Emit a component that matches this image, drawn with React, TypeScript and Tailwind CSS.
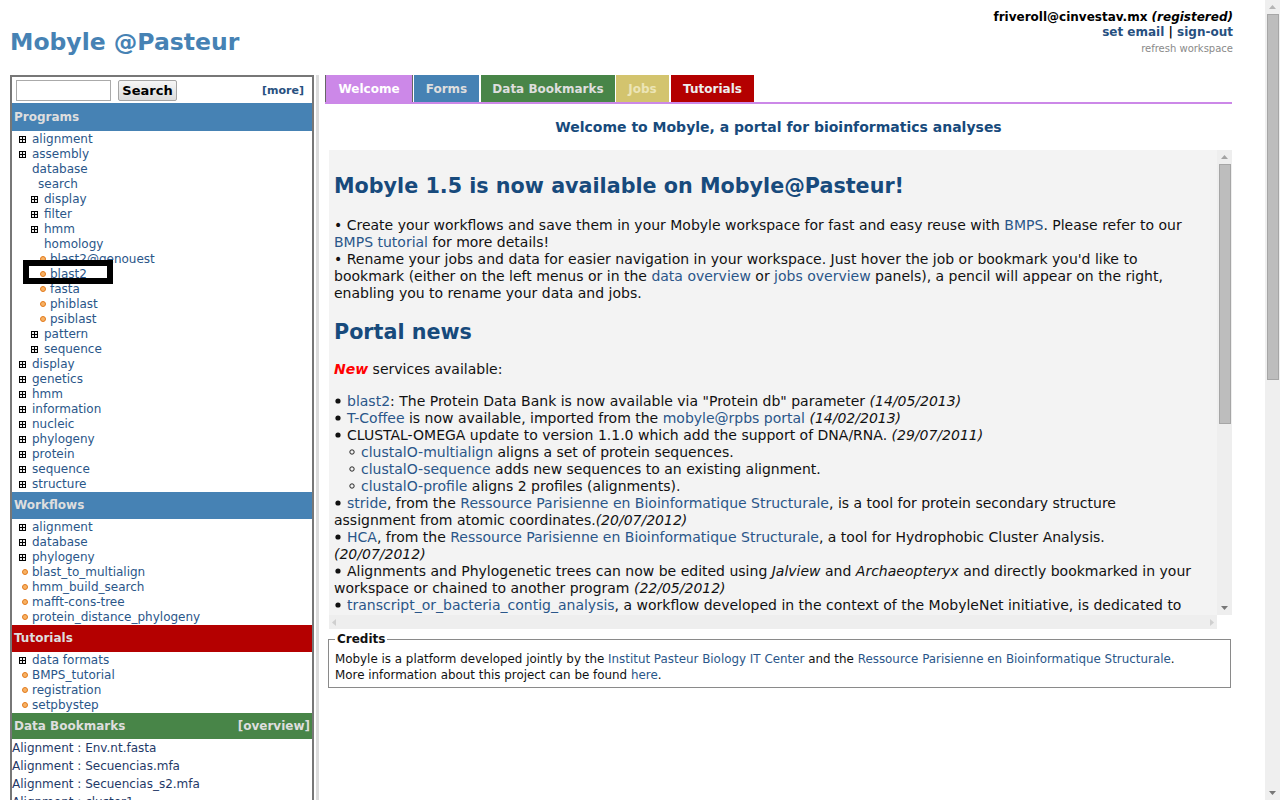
import React from 'react';

type Kind = 'plus' | 'dot' | 'none';
type Node = { t: string; k: Kind; pl: string };

const LINK = 'text-[#2a5689]';

const programs: Node[] = [
  { t: 'alignment', k: 'plus', pl: 'pl-[7px]' },
  { t: 'assembly', k: 'plus', pl: 'pl-[7px]' },
  { t: 'database', k: 'none', pl: 'pl-[20px]' },
  { t: 'search', k: 'none', pl: 'pl-[26px]' },
  { t: 'display', k: 'plus', pl: 'pl-[19px]' },
  { t: 'filter', k: 'plus', pl: 'pl-[19px]' },
  { t: 'hmm', k: 'plus', pl: 'pl-[19px]' },
  { t: 'homology', k: 'none', pl: 'pl-[32px]' },
  { t: 'blast2@genouest', k: 'dot', pl: 'pl-[28px]' },
  { t: 'blast2', k: 'dot', pl: 'pl-[28px]' },
  { t: 'fasta', k: 'dot', pl: 'pl-[28px]' },
  { t: 'phiblast', k: 'dot', pl: 'pl-[28px]' },
  { t: 'psiblast', k: 'dot', pl: 'pl-[28px]' },
  { t: 'pattern', k: 'plus', pl: 'pl-[19px]' },
  { t: 'sequence', k: 'plus', pl: 'pl-[19px]' },
  { t: 'display', k: 'plus', pl: 'pl-[7px]' },
  { t: 'genetics', k: 'plus', pl: 'pl-[7px]' },
  { t: 'hmm', k: 'plus', pl: 'pl-[7px]' },
  { t: 'information', k: 'plus', pl: 'pl-[7px]' },
  { t: 'nucleic', k: 'plus', pl: 'pl-[7px]' },
  { t: 'phylogeny', k: 'plus', pl: 'pl-[7px]' },
  { t: 'protein', k: 'plus', pl: 'pl-[7px]' },
  { t: 'sequence', k: 'plus', pl: 'pl-[7px]' },
  { t: 'structure', k: 'plus', pl: 'pl-[7px]' },
];

const workflows: Node[] = [
  { t: 'alignment', k: 'plus', pl: 'pl-[7px]' },
  { t: 'database', k: 'plus', pl: 'pl-[7px]' },
  { t: 'phylogeny', k: 'plus', pl: 'pl-[7px]' },
  { t: 'blast_to_multialign', k: 'dot', pl: 'pl-[10px]' },
  { t: 'hmm_build_search', k: 'dot', pl: 'pl-[10px]' },
  { t: 'mafft-cons-tree', k: 'dot', pl: 'pl-[10px]' },
  { t: 'protein_distance_phylogeny', k: 'dot', pl: 'pl-[10px]' },
];

const tutorials: Node[] = [
  { t: 'data formats', k: 'plus', pl: 'pl-[7px]' },
  { t: 'BMPS_tutorial', k: 'dot', pl: 'pl-[10px]' },
  { t: 'registration', k: 'dot', pl: 'pl-[10px]' },
  { t: 'setpbystep', k: 'dot', pl: 'pl-[10px]' },
];

const bookmarks = [
  'Alignment : Env.nt.fasta',
  'Alignment : Secuencias.mfa',
  'Alignment : Secuencias_s2.mfa',
  'Alignment : cluster1',
  'Alignment : cluster2',
];

function PlusIcon() {
  return (
    <svg width="7" height="7" viewBox="0 0 7 7" shapeRendering="crispEdges" className="shrink-0">
      <rect width="7" height="7" fill="#000" />
      <rect x="1" y="1" width="2" height="2" fill="#eee" />
      <rect x="4" y="1" width="2" height="2" fill="#eee" />
      <rect x="1" y="4" width="2" height="2" fill="#eee" />
      <rect x="4" y="4" width="2" height="2" fill="#eee" />
    </svg>
  );
}

function DotIcon() {
  return (
    <svg width="6" height="6" viewBox="0 0 6 6" className="-mt-[2px] shrink-0">
      <circle cx="3" cy="3" r="2.5" fill="#f7b265" stroke="#e27a1c" strokeWidth="1" />
    </svg>
  );
}

function TreeRow({ n }: { n: Node }) {
  return (
    <div className={`flex h-[15px] items-center whitespace-nowrap ${n.pl} ${n.k === 'plus' ? 'gap-[6px]' : 'gap-[4px]'}`}>
      {n.k === 'plus' && <PlusIcon />}
      {n.k === 'dot' && <DotIcon />}
      <span className={LINK}>{n.t}</span>
    </div>
  );
}

function SectionHead({ title, bg, h, right }: { title: string; bg: string; h: string; right?: string }) {
  return (
    <div className={`flex items-center justify-between px-[2px] text-[12px] font-bold text-[#dedede] ${bg} ${h}`}>
      <span>{title}</span>
      {right && <span>{right}</span>}
    </div>
  );
}

function Arrow({ dir, color = '#a3a3a3' }: { dir: 'up' | 'down' | 'left' | 'right'; color?: string }) {
  const d = {
    up: 'M0 4L3.5 0L7 4Z',
    down: 'M0 0L7 0L3.5 4Z',
    left: 'M4 0L4 7L0 3.5Z',
    right: 'M0 0L4 3.5L0 7Z',
  }[dir];
  const vertical = dir === 'up' || dir === 'down';
  return (
    <svg width={vertical ? 7 : 4} height={vertical ? 4 : 7} viewBox={vertical ? '0 0 7 4' : '0 0 4 7'}>
      <path d={d} fill={color} />
    </svg>
  );
}

// list marker: filled disc for the news list, hollow circle for the nested one
function Marker({ hollow }: { hollow?: boolean }) {
  return (
    <span className="inline-block w-[13px] align-middle">
      <svg width="6" height="6" viewBox="0 0 6 6" className="mb-[2px] ml-[1px]">
        {hollow ? (
          <circle cx="3" cy="3" r="2.2" fill="none" stroke="#111" strokeWidth="0.9" />
        ) : (
          <circle cx="3" cy="3" r="2.6" fill="#111" />
        )}
      </svg>
    </span>
  );
}

export default function App() {
  return (
    <div className="flex h-[800px] w-[1280px] overflow-hidden bg-white font-['DejaVu_Sans',sans-serif] text-[#111]">
      <div className="flex w-[1265px] flex-col">
        {/* header */}
        <div className="flex h-[75px] shrink-0 justify-between pl-[10px] pr-[32px]">
          <div className="mt-[28px] text-[23.5px] font-bold leading-[28px] text-[#4682b4]">Mobyle @Pasteur</div>
          <div className="flex flex-col items-end pt-[10px]">
            <div className="text-[12px] font-bold leading-[15px] text-black">
              friveroll@cinvestav.mx <i>(registered)</i>
            </div>
            <div className="text-[12px] font-bold leading-[15px]">
              <span className="text-[#27507f]">set email</span> <span className="text-black">|</span>{' '}
              <span className="text-[#27507f]">sign-out</span>
            </div>
            <div className="mt-[2px] text-[10px] leading-[13px] text-[#8a8a8a]">refresh workspace</div>
          </div>
        </div>

        {/* body */}
        <div className="flex h-[725px] overflow-hidden">
          {/* sidebar */}
          <div className="relative ml-[10px] h-[780px] w-[304px] shrink-0 border-2 border-[#777] text-[12px] leading-[15px]">
            <div className="flex h-[26px] items-center pl-[4px] pr-[8px]">
              <input className="h-[21px] w-[95px] border border-[#aaa] bg-white" />
              <button className="ml-[7px] h-[21px] w-[59px] rounded-[2px] border border-[#a5a5a5] bg-gradient-to-b from-[#f6f6f6] to-[#dcdcdc] text-[13px] font-bold text-black">
                Search
              </button>
              <span className="ml-auto text-[11px] font-bold text-[#27507f]">[more]</span>
            </div>
            <SectionHead title="Programs" bg="bg-[#4682b4]" h="h-[28px]" />
            <div className="pt-[1px]">
              {programs.map((n, i) => (
                <TreeRow key={i} n={n} />
              ))}
            </div>
            <SectionHead title="Workflows" bg="bg-[#4682b4]" h="h-[27px]" />
            <div className="pt-[1px]">
              {workflows.map((n, i) => (
                <TreeRow key={i} n={n} />
              ))}
            </div>
            <SectionHead title="Tutorials" bg="bg-[#b40000]" h="h-[27px]" />
            <div className="pt-[1px]">
              {tutorials.map((n, i) => (
                <TreeRow key={i} n={n} />
              ))}
            </div>
            <SectionHead title="Data Bookmarks" bg="bg-[#488548]" h="h-[26px]" right="[overview]" />
            {bookmarks.map((b) => (
              <div key={b} className="h-[18px] whitespace-nowrap leading-[18px] text-[#1f3a68]">
                {b}
              </div>
            ))}
            {/* annotation box drawn over blast2 */}
            <div className="absolute left-[11px] top-[183px] h-[24px] w-[90px] border-[6px] border-black" />
          </div>

          <div className="ml-[2px] w-[3px] shrink-0 bg-[#dcdcdc]" />

          {/* main */}
          <div className="ml-[6px] flex w-[907px] shrink-0 flex-col">
            <div className="flex h-[29px] items-end gap-[1px] border-b-2 border-[#cc88e8] text-[12px] font-bold">
              <div className="flex h-[28px] w-[88px] items-center justify-center border border-b-0 border-[#666] bg-[#cc88e8] text-white">
                Welcome
              </div>
              <div className="flex h-[27px] w-[65px] items-center justify-center bg-[#4682b4] text-[#dedede]">Forms</div>
              <div className="ml-[1px] flex h-[27px] w-[134px] items-center justify-center bg-[#488548] text-[#dedede]">
                Data Bookmarks
              </div>
              <div className="flex h-[27px] w-[53px] items-center justify-center bg-[#d3c46e] text-[#ece5b6]">Jobs</div>
              <div className="ml-[1px] flex h-[27px] w-[83px] items-center justify-center bg-[#b40000] text-[#eeeeee]">
                Tutorials
              </div>
            </div>

            <div className="mt-[15px] text-center text-[14px] font-bold leading-[17px] text-[#174a7c]">
              Welcome to Mobyle, a portal for bioinformatics analyses
            </div>

            {/* news box */}
            <div className="ml-[4px] mt-[14px] flex h-[479px] w-[903px] flex-col bg-[#f3f3f3]">
              <div className="flex h-[465px]">
                <div className="w-[888px] overflow-hidden pl-[5px] pr-[22px] pt-[24px] text-[14px] leading-[17px]">
                  <h2 className="text-[20.7px] font-bold leading-[25px] text-[#174a7c]">
                    Mobyle 1.5 is now available on Mobyle@Pasteur!
                  </h2>
                  <p className="mt-[18px]">
                    • Create your workflows and save them in your Mobyle workspace for fast and easy reuse with{' '}
                    <span className={LINK}>BMPS</span>. Please refer to our <span className={LINK}>BMPS tutorial</span> for
                    more details!
                    <br />• Rename your jobs and data for easier navigation in your workspace. Just hover the job or
                    bookmark you'd like to bookmark (either on the left menus or in the{' '}
                    <span className={LINK}>data overview</span> or <span className={LINK}>jobs overview</span> panels), a
                    pencil will appear on the right, enabling you to rename your data and jobs.
                  </p>
                  <h2 className="mt-[18px] text-[20.7px] font-bold leading-[25px] text-[#174a7c]">Portal news</h2>
                  <p className="mt-[16px]">
                    <b className="italic text-[#ff0000]">New</b> services available:
                  </p>
                  <ul className="mt-[15px]">
                    <li>
                      <Marker />
                      <span className={LINK}>blast2</span>: The Protein Data Bank is now available via "Protein db"
                      parameter <i>(14/05/2013)</i>
                    </li>
                    <li>
                      <Marker />
                      <span className={LINK}>T-Coffee</span> is now available, imported from the{' '}
                      <span className={LINK}>mobyle@rpbs portal</span> <i>(14/02/2013)</i>
                    </li>
                    <li>
                      <Marker />
                      CLUSTAL-OMEGA update to version 1.1.0 which add the support of DNA/RNA. <i>(29/07/2011)</i>
                      <ul className="pl-[14px]">
                        <li>
                          <Marker hollow />
                          <span className={LINK}>clustalO-multialign</span> aligns a set of protein sequences.
                        </li>
                        <li>
                          <Marker hollow />
                          <span className={LINK}>clustalO-sequence</span> adds new sequences to an existing alignment.
                        </li>
                        <li>
                          <Marker hollow />
                          <span className={LINK}>clustalO-profile</span> aligns 2 profiles (alignments).
                        </li>
                      </ul>
                    </li>
                    <li>
                      <Marker />
                      <span className={LINK}>stride</span>, from the{' '}
                      <span className={LINK}>Ressource Parisienne en Bioinformatique Structurale</span>, is a tool for
                      protein secondary structure assignment from atomic coordinates.<i>(20/07/2012)</i>
                    </li>
                    <li>
                      <Marker />
                      <span className={LINK}>HCA</span>, from the{' '}
                      <span className={LINK}>Ressource Parisienne en Bioinformatique Structurale</span>, a tool for
                      Hydrophobic Cluster Analysis. <i>(20/07/2012)</i>
                    </li>
                    <li>
                      <Marker />
                      Alignments and Phylogenetic trees can now be edited using <i>Jalview</i> and <i>Archaeopteryx</i>{' '}
                      and directly bookmarked in your workspace or chained to another program <i>(22/05/2012)</i>
                    </li>
                    <li>
                      <Marker />
                      <span className={LINK}>transcript_or_bacteria_contig_analysis</span>, a workflow developed in the
                      context of the MobyleNet initiative, is dedicated to the analysis of transcripts or bacterial
                      contigs.
                    </li>
                  </ul>
                </div>
                {/* inner vertical scrollbar */}
                <div className="flex w-[15px] flex-col items-center bg-[#eeeeee]">
                  <div className="flex h-[14px] items-center justify-center">
                    <Arrow dir="up" />
                  </div>
                  <div className="h-[260px] w-[12px] border border-[#a6a6a6] bg-[#bdbdbd]" />
                  <div className="flex-1" />
                  <div className="flex h-[14px] items-center justify-center">
                    <Arrow dir="down" color="#777" />
                  </div>
                </div>
              </div>
              <div className="flex h-[14px]">
                <div className="flex w-[888px] items-center justify-between bg-[#eeeeee] px-[3px]">
                  <Arrow dir="left" color="#cfcfcf" />
                  <Arrow dir="right" color="#cfcfcf" />
                </div>
                <div className="w-[15px] bg-white" />
              </div>
            </div>

            {/* credits */}
            <fieldset className="ml-[3px] mt-[3px] w-[903px] border border-[#8a8a8a] pb-[4px] pl-[6px] text-[11.9px] leading-[16px]">
              <legend className="px-[2px] text-[12px] font-bold leading-[14px]">Credits</legend>
              <p className="pt-[5px]">
                Mobyle is a platform developed jointly by the{' '}
                <span className={LINK}>Institut Pasteur Biology IT Center</span> and the{' '}
                <span className={LINK}>Ressource Parisienne en Bioinformatique Structurale</span>.
                <br />
                More information about this project can be found <span className={LINK}>here</span>.
              </p>
            </fieldset>
          </div>
        </div>
      </div>

      {/* page scrollbar */}
      <div className="flex w-[15px] flex-col items-center bg-[#efefef]">
        <div className="flex h-[14px] items-center justify-center">
          <Arrow dir="up" color="#b5b5b5" />
        </div>
        <div className="h-[366px] w-[12px] border border-[#a6a6a6] bg-[#bdbdbd]" />
        <div className="flex-1" />
        <div className="flex h-[14px] items-center justify-center">
          <Arrow dir="down" color="#777" />
        </div>
      </div>
    </div>
  );
}
